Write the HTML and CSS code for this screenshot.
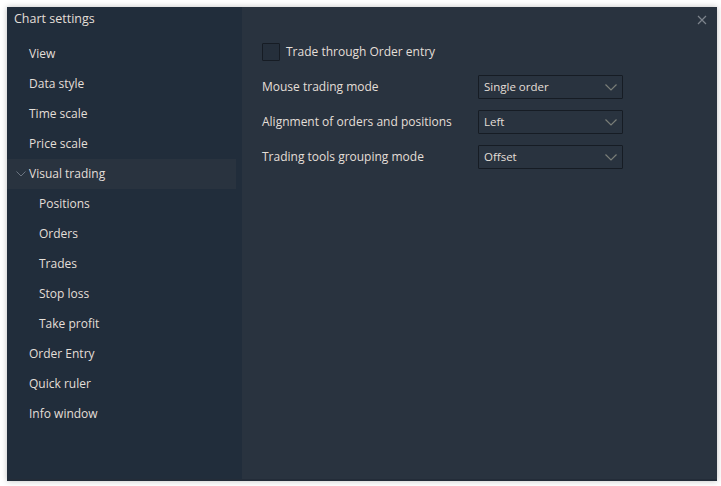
FILE: index.html
```html
<!DOCTYPE html>
<html>
<head>
<meta charset="utf-8">
<link rel="stylesheet" href="styles.css">
</head>
<body>
<div class="dialog">
  <aside class="sidebar">
    <div class="title">Chart settings</div>
    <ul class="nav">
      <li class="item">View</li>
      <li class="item">Data style</li>
      <li class="item">Time scale</li>
      <li class="item">Price scale</li>
      <li class="item active"><svg class="caret" width="10" height="6" viewBox="0 0 10 6"><path d="M0.5 0.5 L5 5 L9.5 0.5" fill="none" stroke="#6b7480" stroke-width="1"/></svg>Visual trading</li>
      <li class="item sub">Positions</li>
      <li class="item sub">Orders</li>
      <li class="item sub">Trades</li>
      <li class="item sub">Stop loss</li>
      <li class="item sub">Take profit</li>
      <li class="item">Order Entry</li>
      <li class="item">Quick ruler</li>
      <li class="item">Info window</li>
    </ul>
  </aside>
  <main class="content">
    <button class="close" aria-label="Close"><svg width="10" height="10" viewBox="0 0 10 10"><path d="M1 1 L9 9 M9 1 L1 9" stroke="#7c838c" stroke-width="1.2"/></svg></button>
    <label class="check-row"><span class="checkbox"></span><span>Trade through Order entry</span></label>
    <div class="field">
      <span class="label">Mouse trading mode</span>
      <div class="select"><span>Single order</span><svg class="chev" width="12" height="7" viewBox="0 0 12 7"><path d="M0.5 0.5 L6 6 L11.5 0.5" fill="none" stroke="#7a7e78" stroke-width="1.2"/></svg></div>
    </div>
    <div class="field">
      <span class="label">Alignment of orders and positions</span>
      <div class="select"><span>Left</span><svg class="chev" width="12" height="7" viewBox="0 0 12 7"><path d="M0.5 0.5 L6 6 L11.5 0.5" fill="none" stroke="#7a7e78" stroke-width="1.2"/></svg></div>
    </div>
    <div class="field">
      <span class="label">Trading tools grouping mode</span>
      <div class="select"><span>Offset</span><svg class="chev" width="12" height="7" viewBox="0 0 12 7"><path d="M0.5 0.5 L6 6 L11.5 0.5" fill="none" stroke="#7a7e78" stroke-width="1.2"/></svg></div>
    </div>
  </main>
</div>
</body>
</html>
```
FILE: styles.css
```css
* { box-sizing: border-box; }
html, body { margin: 0; padding: 0; background: #ffffff; }
body {
  padding: 7px 4px 5px 7px;
  font-family: "Open Sans", "Noto Sans", sans-serif;
  font-size: 12px;
  font-weight: 500;
  color: #e4dfd8;
}
.dialog {
  display: flex;
  width: 710px;
  height: 474px;
  background: #29333f;
  box-shadow: 0 0 6px rgba(0,0,0,0.25);
  border-bottom: 2px solid #232c38;
}
.sidebar {
  width: 235px;
  background: #212d3b;
  flex-shrink: 0;
}
.title {
  height: 32px;
  padding: 3px 0 0 7px;
  font-size: 12.5px;
}
.nav {
  list-style: none;
  margin: 0;
  padding: 0;
}
.item {
  height: 30px;
  display: flex;
  align-items: center;
  padding-left: 22px;
  padding-bottom: 2px;
  width: 229px;
  position: relative;
}
.item.sub { padding-left: 32px; }
.item.active { background: #29333f; }
.caret { position: absolute; left: 9px; top: 12px; }
.content {
  flex: 1;
  position: relative;
  padding: 36px 0 0 20px;
}
.close {
  position: absolute;
  right: 9px;
  top: 7px;
  width: 12px;
  height: 12px;
  padding: 0;
  border: 0;
  background: none;
  display: flex;
  align-items: center;
  justify-content: center;
}
.check-row {
  display: flex;
  align-items: center;
  gap: 6px;
  height: 18px;
  margin-bottom: 14px;
}
.check-row span:last-child { margin-top: -2px; }
.checkbox {
  width: 18px;
  height: 18px;
  background: #252f3b;
  border: 1px solid #161c24;
  border-radius: 1px;
}
.field {
  display: flex;
  align-items: center;
  height: 24px;
  margin-bottom: 11px;
}
.label { width: 216px; margin-top: -2px; }
.select {
  width: 145px;
  height: 24px;
  border: 1px solid #161c24;
  border-radius: 1px;
  display: flex;
  align-items: center;
  justify-content: space-between;
  padding: 0 5px 1px 5px;
  font-size: 11.5px;
}
.chev { margin-top: 2px; }
```
